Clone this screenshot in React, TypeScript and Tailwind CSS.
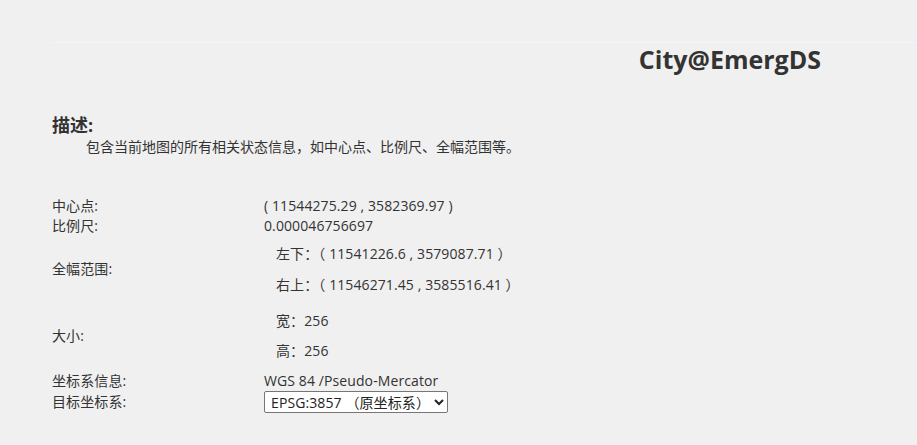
import React from 'react';

const font = { fontFamily: '"Open Sans", "Noto Sans CJK SC", sans-serif' };

function Row({ label, children, className = '' }: { label: string; children: React.ReactNode; className?: string }) {
  return (
    <div className={`grid grid-cols-[212px_1fr] items-center ${className}`}>
      <div>{label}</div>
      <div>{children}</div>
    </div>
  );
}

export default function App() {
  return (
    <div className="min-h-[445px] w-[917px] bg-[#f0f0f0] text-[#333] text-[14px] pt-[42px] pl-[52px]" style={font}>
      <div className="border-t border-[#f5f5f8]">
        <h1 className="text-right pr-[96px] text-[25px] font-bold leading-[30px] mt-[1px] text-[#333]">City@EmergDS</h1>
      </div>

      <div className="mt-[39px]">
        <h2 className="text-[18px] font-bold leading-[24px]">描述:</h2>
        <p className="pl-[34px] leading-[20px] text-[14px]">包含当前地图的所有相关状态信息，如中心点、比例尺、全幅范围等。</p>
      </div>

      <div className="mt-[39px] leading-[20px] tracking-[0.1px]">
        <Row label="中心点:" className="h-[20px]">( 11544275.29 , 3582369.97 )</Row>
        <Row label="比例尺:" className="h-[20px]">0.000046756697</Row>
        <Row label="全幅范围:" className="mt-[2px]">
          <div className="pl-[12px]">
            <div className="h-[31px] flex items-center">左下：（ 11541226.6 , 3579087.71 ）</div>
            <div className="h-[31px] flex items-center">右上：（ 11546271.45 , 3585516.41 ）</div>
          </div>
        </Row>
        <Row label="大小:" className="mt-[6px]">
          <div className="pl-[12px]">
            <div className="h-[30px] flex items-center">宽：256</div>
            <div className="h-[30px] flex items-center">高：256</div>
          </div>
        </Row>
        <Row label="坐标系信息:" className="h-[20px] mt-[5px]">WGS 84 /Pseudo-Mercator</Row>
        <Row label="目标坐标系:" className="h-[22px]">
          <select className="w-[184px] h-[22px] bg-white border border-[#767676] rounded-[2px] pl-[2px] text-[14px] text-[#222] outline-none" style={font} defaultValue="3857">
            <option value="3857">EPSG:3857 （原坐标系）</option>
          </select>
        </Row>
      </div>
    </div>
  );
}
